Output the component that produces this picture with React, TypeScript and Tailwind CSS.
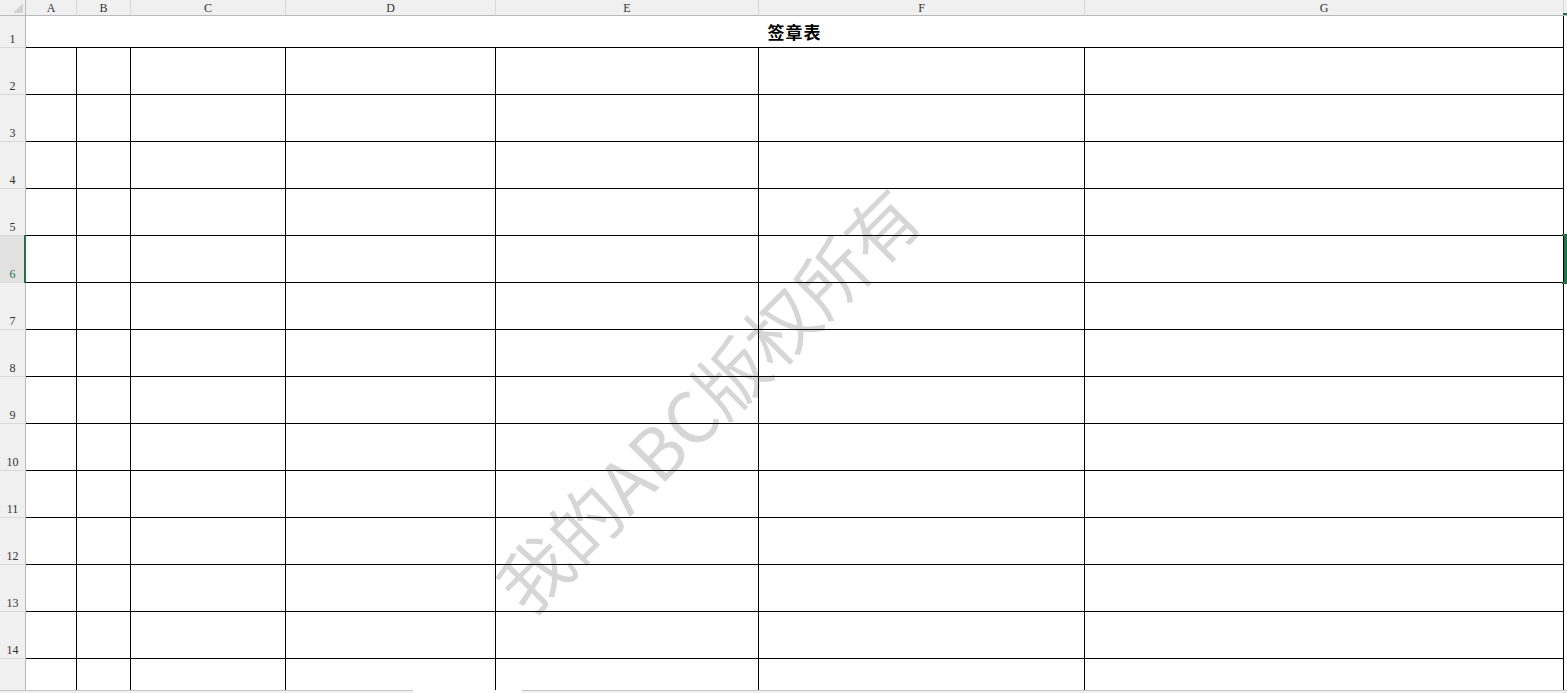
import React from "react";

const cols = ["A", "B", "C", "D", "E", "F", "G"];
const bodyRows = [2, 3, 4, 5, 6, 7, 8, 9, 10, 11, 12, 13, 14, 15];
const SELECTED = 6;

function RowHead({ n, last }: { n: number; last?: boolean }) {
  const on = n === SELECTED;
  return (
    <div
      className={`flex items-end justify-center pb-[1px] border-r border-[#b9b9b9] ${
        last ? "" : "border-b border-b-[#dadada]"
      } ${on ? "bg-[#e1e1e1] text-[#217346]" : "bg-[#f0f0f0] text-[#333]"}`}
    >
      {!last && <span className="leading-[14px]">{n}</span>}
    </div>
  );
}

export default function App() {
  return (
    <div className="relative w-[1567px] h-[693px] overflow-hidden bg-white font-['Liberation_Serif',serif] text-[12px]">
      {/* watermark sits behind the grid lines */}
      <div className="absolute left-[706px] top-[398px] -translate-x-1/2 -translate-y-1/2 -rotate-45 whitespace-nowrap leading-none text-[71px] font-normal text-[#d6d6d6] font-['Noto_Sans_CJK_SC',sans-serif] pointer-events-none select-none">
        我的ABC版权所有
      </div>

      <div className="relative grid grid-cols-[26px_51px_54px_155px_210px_263px_326px_479px_3px] grid-rows-[16px_32px_repeat(13,47px)_31px]">
        {/* column header */}
        <div className="relative bg-[#f0f0f0] border-r border-b border-[#b9b9b9]">
          <svg className="absolute right-[2px] bottom-[2px]" width="10" height="10" viewBox="0 0 10 10">
            <polygon points="10,0 10,10 0,10" fill="#d2d2d2" />
          </svg>
        </div>
        {cols.map(c => (
          <div
            key={c}
            className="flex items-center justify-center bg-[#f0f0f0] border-b border-b-[#b9b9b9] border-r border-r-[#d8d8d8] text-[#333] leading-[15px] pt-[1px]"
          >
            {c}
          </div>
        ))}
        <div className="bg-[#f0f0f0] border-b border-[#b9b9b9]" />

        {/* row 1: title merged across A:G */}
        <RowHead n={1} />
        <div className="col-span-7 flex items-center justify-center border-r border-b border-black font-['Noto_Sans_CJK_SC',sans-serif] font-bold text-[17px] text-black tracking-[1px]">
          签章表
        </div>
        <div />

        {bodyRows.map(r => {
          const last = r === 15;
          return (
            <React.Fragment key={r}>
              <RowHead n={r} last={last} />
              {cols.map(c => (
                <div key={c} className={`border-r border-black ${last ? "" : "border-b"}`} />
              ))}
              <div />
            </React.Fragment>
          );
        })}
      </div>

      {/* bottom edge of sheet tabs / scroll bar */}
      <div className="flex h-[3px]">
        <div className="w-[413px] bg-[#f0f0f0] border-t border-[#c6c6c6]" />
        <div className="w-[109px] bg-white" />
        <div className="flex-1 bg-[#f0f0f0] border-t border-[#c6c6c6]" />
      </div>

      {/* selection of row 6 */}
      <div className="absolute left-[24px] top-[235px] w-[2px] h-[48px] bg-[#217346]" />
      <div className="absolute left-[1562px] top-[234px] w-[5px] h-[50px] border-t-2 border-b-2 border-r-[3px] border-[#217346]" />
      <div className="absolute left-[1563px] top-[13px] w-[4px] h-[2px] bg-[#217346]" />
    </div>
  );
}
